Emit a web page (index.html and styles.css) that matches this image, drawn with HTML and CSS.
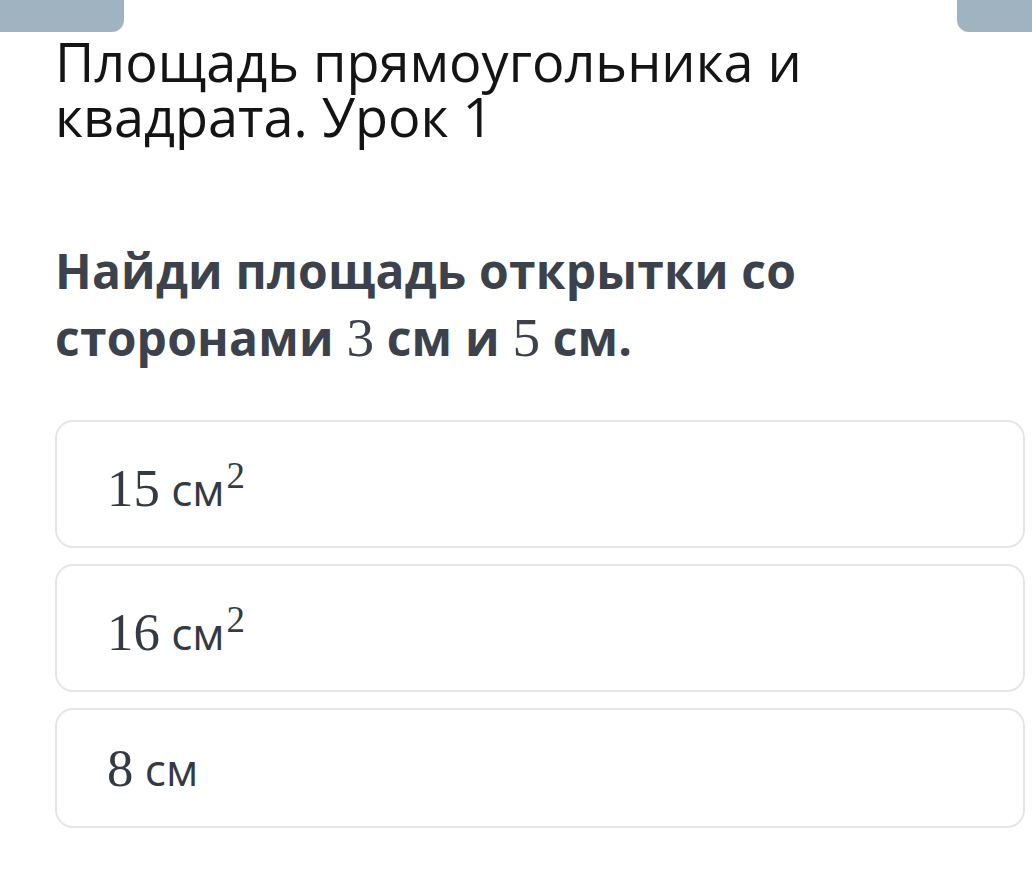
FILE: index.html
```html
<!DOCTYPE html>
<html lang="ru">
<head>
<meta charset="utf-8">
<link rel="stylesheet" href="styles.css">
</head>
<body>
<div class="topbar">
  <div class="tab tab-left"></div>
  <div class="tab tab-right"></div>
</div>
<main class="content">
  <h1 class="title">Площадь прямоугольника и квадрата. Урок 1</h1>
  <p class="question">Найди площадь открытки со сторонами <span class="math">3</span> см и <span class="math">5</span> см.</p>
  <div class="options">
    <div class="option option-tall"><span class="math">15</span> см<sup class="math sup">2</sup></div>
    <div class="option option-tall"><span class="math">16</span> см<sup class="math sup">2</sup></div>
    <div class="option"><span class="math">8</span> см</div>
  </div>
</main>
</body>
</html>
```
FILE: styles.css
```css
html, body {
  margin: 0;
  padding: 0;
  background: #ffffff;
}
body {
  width: 1032px;
  height: 892px;
  overflow: hidden;
  font-family: "Open Sans", "Noto Sans", sans-serif;
}
.topbar {
  display: flex;
  justify-content: space-between;
  height: 32px;
}
.tab {
  background: #9fb3c0;
  height: 32px;
}
.tab-left {
  width: 124px;
  border-bottom-right-radius: 12px;
}
.tab-right {
  width: 75px;
  border-bottom-left-radius: 12px;
}
.content {
  padding: 2px 7px 0 55px;
}
.title {
  margin: 0;
  font-weight: 400;
  font-size: 54px;
  line-height: 55px;
  color: #141414;
}
.question {
  margin: 93px 0 0;
  font-weight: 700;
  font-size: 48px;
  line-height: 67px;
  letter-spacing: 0.2px;
  color: #3b424b;
}
.math {
  font-family: "Liberation Serif", "DejaVu Serif", serif;
  font-weight: 400;
  line-height: 1;
  letter-spacing: 0;
}
.question .math {
  font-size: 1.15em;
}
.options {
  margin-top: 49px;
  display: flex;
  flex-direction: column;
  gap: 16px;
}
.option {
  border: 2px solid #e3e6e8;
  border-radius: 18px;
  padding: 29px 50px 27px;
  font-size: 44px;
  line-height: 60px;
  color: #333a43;
}
.option .math {
  font-size: 1.2em;
}
.option-tall {
  padding-top: 37px;
}
.option .sup {
  font-size: 37px;
  line-height: 0;
  vertical-align: 18px;
  margin-left: 2px;
}
```
